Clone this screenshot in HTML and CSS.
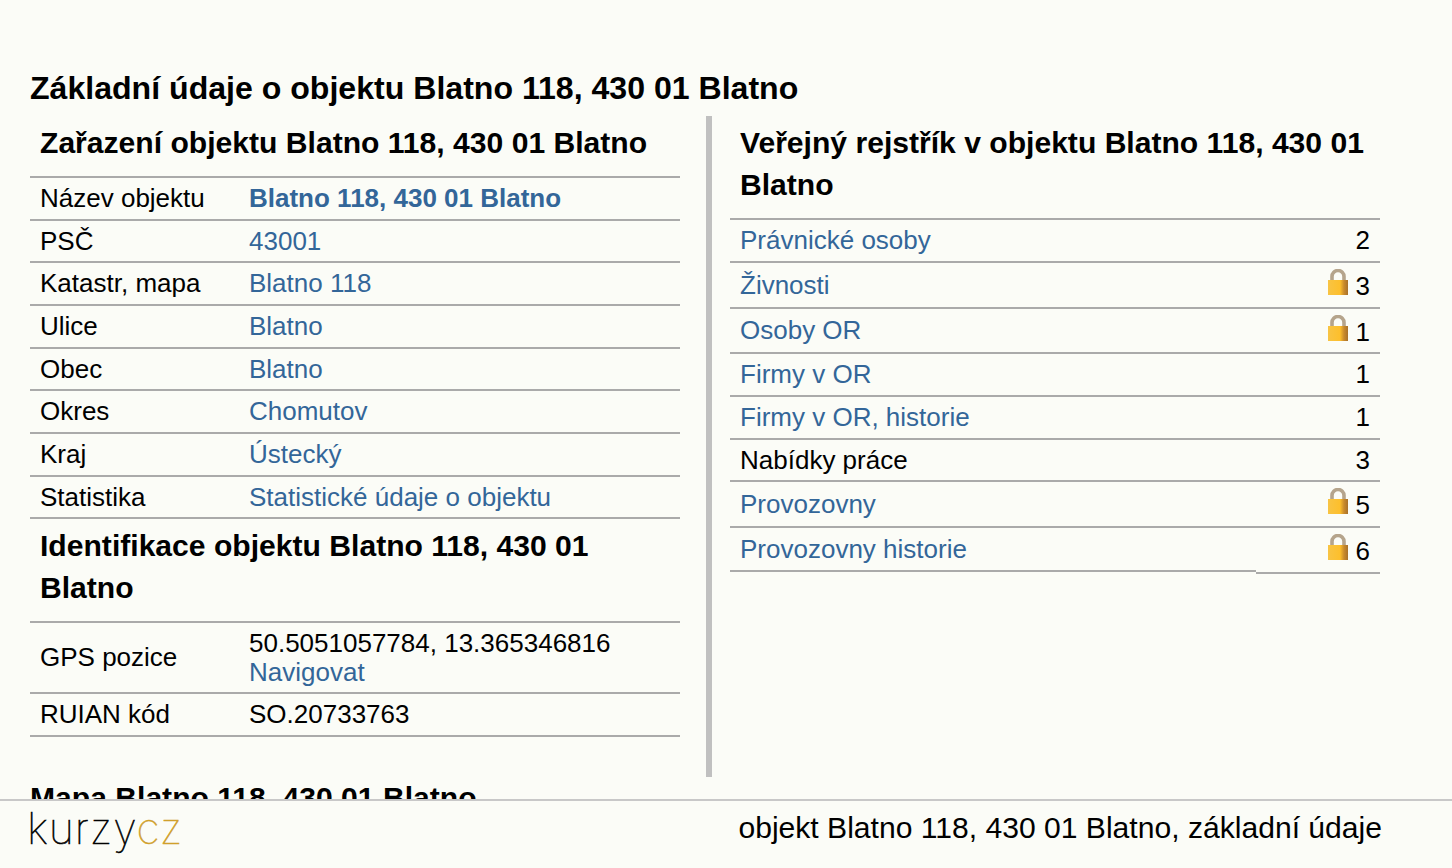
FILE: index.html
```html
<!DOCTYPE html>
<html lang="cs">
<head>
    <meta charset="UTF-8">
    <meta name="viewport" content="width=device-width, initial-scale=1.0">
    <title>objekt Blatno 118, 430 01 Blatno, základní údaje</title>
    <link rel="stylesheet" href="styles.css">
</head>
<body>
    <svg class="defs" width="0" height="0">
        <defs>
            <linearGradient id="lockBody" x1="0" x2="1" y1="0" y2="0">
                <stop offset="0" stop-color="#f8c444"/>
                <stop offset="0.6" stop-color="#fdbf2c"/>
                <stop offset="0.8" stop-color="#c98a2c"/>
                <stop offset="1" stop-color="#a8702a"/>
            </linearGradient>
            <symbol id="lock" viewBox="0 0 20 26">
                <path d="M4 13V7.5a6 6 0 0 1 12 0V13" fill="none" stroke="#b5a48c" stroke-width="3.6"/>
                <rect x="0" y="11" width="20" height="15" fill="url(#lockBody)"/>
            </symbol>
        </defs>
    </svg>
    <main class="content">
        <h1>Základní údaje o objektu Blatno 118, 430 01 Blatno</h1>
        <div class="columns">
            <section class="col-left">
                <h2>Zařazení objektu Blatno 118, 430 01 Blatno</h2>
                <table class="info">
                    <tr><td class="label">Název objektu</td><td><a href="#"><b>Blatno 118, 430 01 Blatno</b></a></td></tr>
                    <tr><td class="label">PSČ</td><td><a href="#">43001</a></td></tr>
                    <tr><td class="label">Katastr, mapa</td><td><a href="#">Blatno 118</a></td></tr>
                    <tr><td class="label">Ulice</td><td><a href="#">Blatno</a></td></tr>
                    <tr><td class="label">Obec</td><td><a href="#">Blatno</a></td></tr>
                    <tr><td class="label">Okres</td><td><a href="#">Chomutov</a></td></tr>
                    <tr><td class="label">Kraj</td><td><a href="#">Ústecký</a></td></tr>
                    <tr><td class="label">Statistika</td><td><a href="#">Statistické údaje o objektu</a></td></tr>
                </table>
                <h2>Identifikace objektu Blatno 118, 430 01 Blatno</h2>
                <table class="info">
                    <tr class="double-row"><td class="label">GPS pozice</td><td>50.5051057784, 13.365346816<br><a href="#">Navigovat</a></td></tr>
                    <tr><td class="label">RUIAN kód</td><td>SO.20733763</td></tr>
                </table>
            </section>
            <section class="col-right">
                <h2>Veřejný rejstřík v objektu Blatno 118, 430 01 Blatno</h2>
                <table class="info register">
                    <tr class="first-row"><td><a href="#">Právnické osoby</a></td><td class="count">2</td></tr>
                    <tr><td><a href="#">Živnosti</a></td><td class="count"><svg class="lock"><use href="#lock"/></svg> 3</td></tr>
                    <tr><td><a href="#">Osoby OR</a></td><td class="count"><svg class="lock"><use href="#lock"/></svg> 1</td></tr>
                    <tr><td><a href="#">Firmy v OR</a></td><td class="count">1</td></tr>
                    <tr><td><a href="#">Firmy v OR, historie</a></td><td class="count">1</td></tr>
                    <tr><td>Nabídky práce</td><td class="count">3</td></tr>
                    <tr><td><a href="#">Provozovny</a></td><td class="count"><svg class="lock"><use href="#lock"/></svg> 5</td></tr>
                    <tr class="last-row"><td><a href="#">Provozovny historie</a></td><td class="count"><svg class="lock"><use href="#lock"/></svg> 6</td></tr>
                </table>
            </section>
        </div>
        <h2 class="map-title">Mapa Blatno 118, 430 01 Blatno</h2>
    </main>
    <footer class="bottom">
        <div class="logo">kurzy<span class="logo-cz">cz</span></div>
        <div class="page-name">objekt Blatno 118, 430 01 Blatno, základní údaje</div>
    </footer>
</body>
</html>
```

FILE: styles.css
```css
html, body {
    height: 100%;
}
body {
    margin: 0;
    font-family: "Liberation Sans", Arial, sans-serif;
    font-size: 26px;
    line-height: 29px;
    background-color: #fbfcf7;
    color: #000;
    display: flex;
    flex-direction: column;
    overflow: hidden;
}
.defs {
    position: absolute;
}
a {
    color: #336699;
    text-decoration: none;
}
.content {
    flex: 1;
    min-height: 0;
    overflow: hidden;
    padding: 67px 30px 0;
}
h1 {
    font-size: 32.1px;
    line-height: 42px;
    margin: 0 0 7px;
}
h2 {
    font-size: 30.1px;
    line-height: 42px;
    margin: 0;
    padding: 6px 10px 12px;
}
.columns {
    display: flex;
    height: 661px;
}
.col-left {
    width: 650px;
}
.col-right {
    width: 650px;
    margin-left: 26px;
    padding-left: 18px;
    border-left: 6px solid #c0c0c0;
}
.info {
    width: 100%;
    border-collapse: collapse;
    border-top: 2px solid #aaa;
}
.info td {
    padding: 6px 10px 5.67px;
    border-bottom: 2px solid #aaa;
}
.info .label {
    width: 189px;
}
.info .double-row td {
    padding-bottom: 5px;
}
.info .double-row .label {
    padding-top: 5px;
    padding-bottom: 6px;
}
.register .first-row td {
    padding-bottom: 6.17px;
}
.register .last-row td:first-child {
    border-bottom: none;
    padding-bottom: 7.67px;
    background: linear-gradient(#aaa, #aaa) 0 calc(100% - 1px) / 100% 2px no-repeat;
}
.info .count {
    width: 104px;
    text-align: right;
    white-space: nowrap;
}
.lock {
    width: 20px;
    height: 26px;
}
.map-title {
    padding: 0;
}
.bottom {
    flex: none;
    box-sizing: border-box;
    height: 69px;
    border-top: 2px solid #c8c8c8;
    display: flex;
    justify-content: space-between;
    align-items: flex-start;
    padding: 12px 70px 0 30px;
}
.logo {
    font-family: Inter, sans-serif;
    font-weight: 100;
    font-size: 43px;
    line-height: 40px;
    margin: -5px 0 0 -3px;
    letter-spacing: 0.9px;
    color: #000;
    -webkit-text-stroke: 0.6px #000;
}
.logo-cz {
    color: #d0a02c;
    -webkit-text-stroke: 0.6px #d0a02c;
}
.page-name {
    font-size: 30.1px;
}
```
